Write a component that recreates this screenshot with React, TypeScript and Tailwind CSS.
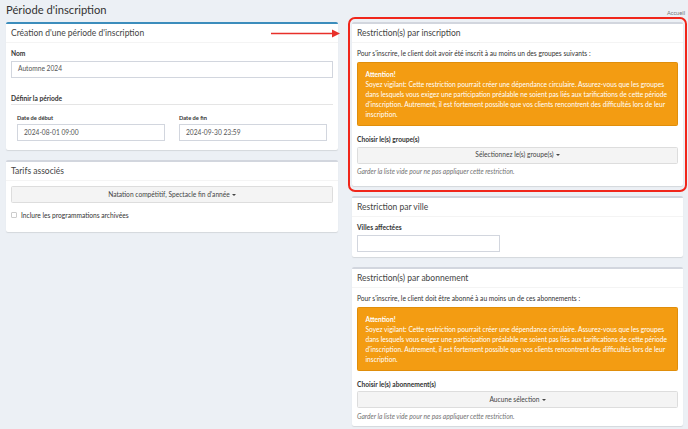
import React from "react";

const font = { fontFamily: "Lato, 'Open Sans', sans-serif" };

function Box({
  title,
  primary,
  children,
}: {
  title: string;
  primary?: boolean;
  children: React.ReactNode;
}) {
  return (
    <div
      className={
        primary
          ? "bg-white rounded-[2px] border-t-2 border-[#3c8dbc] shadow-[0_1px_1px_rgba(0,0,0,0.1)] mb-[10px]"
          : "bg-white rounded-[2px] border-t-2 border-[#d2d6de] shadow-[0_1px_1px_rgba(0,0,0,0.1)] mb-[10px]"
      }
    >
      <div className="px-[5px] pt-[4px] pb-[4px] border-b border-[#f4f4f4]">
        <h3 className="text-[8.5px] leading-[10px] text-[#444]">{title}</h3>
      </div>
      <div className="p-[5px]">{children}</div>
    </div>
  );
}

function Label({ children }: { children: React.ReactNode }) {
  return (
    <div className="text-[6.65px] leading-[10px] font-bold text-[#333] mb-[2.5px]">
      {children}
    </div>
  );
}

function Input({ value, className }: { value?: string; className?: string }) {
  return (
    <div
      className={
        "h-[17px] border border-[#d2d6de] bg-white px-[6px] flex items-center text-[6.65px] text-[#555] " +
        (className || "")
      }
    >
      {value}
    </div>
  );
}

function Dropdown({ label }: { label: string }) {
  return (
    <div className="h-[17px] rounded-[1.5px] border border-[#ddd] bg-[#f4f4f4] flex items-center justify-center text-[6.65px] text-[#444] gap-[2px]">
      <span>{label}</span>
      <span className="inline-block w-0 h-0 border-x-[2px] border-x-transparent border-t-[2px] border-t-[#444]" />
    </div>
  );
}

function Warning() {
  return (
    <div className="bg-[#f39c12] border border-[#e08e0b] rounded-[1.5px] px-[7.5px] py-[6px] text-white text-[6.65px] leading-[10px] whitespace-nowrap">
      <div className="font-bold">Attention!</div>
      <div>
        Soyez vigilant: Cette restriction pourrait créer une dépendance circulaire. Assurez-vous que les groupes
      </div>
      <div>
        dans lesquels vous exigez une participation préalable ne soient pas liés aux tarifications de cette période
      </div>
      <div>
        d'inscription. Autrement, il est fortement possible que vos clients rencontrent des difficultés lors de leur
      </div>
      <div>inscription.</div>
    </div>
  );
}

function Help() {
  return (
    <div className="text-[6.65px] leading-[10px] italic text-[#737373] mt-[2.5px]">
      Garder la liste vide pour ne pas appliquer cette restriction.
    </div>
  );
}

export default function App() {
  return (
    <div
      className="relative w-[688px] h-[429px] overflow-hidden bg-[#ecf0f5] text-[#333]"
      style={font}
    >
      <div className="flex justify-between items-start px-[6px] pt-[2px] h-[22px]">
        <h1 className="text-[11.2px] leading-[16px] text-[#333]">Période d'inscription</h1>
        <span className="text-[5.7px] text-[#777] mt-[7px] mr-[-3px]">Accueil</span>
      </div>

      <div className="grid grid-cols-[332px_331px] gap-x-[14px] pl-[6px]">
        <div>
          <Box title="Création d'une période d'inscription" primary>
            <Label>Nom</Label>
            <Input value="Automne 2024" />
            <div className="mt-[15px] pb-[1px] border-b border-[#e5e5e5] text-[6.65px] leading-[10px] font-bold">
              Définir la période
            </div>
            <div className="grid grid-cols-2 gap-x-[14px] px-[6px] mt-[9.5px] pb-[4px]">
              <div>
                <div className="text-[5.7px] leading-[8px] font-bold mb-[2px]">Date de début</div>
                <Input value="2024-08-01 09:00" />
              </div>
              <div>
                <div className="text-[5.7px] leading-[8px] font-bold mb-[2px]">Date de fin</div>
                <Input value="2024-09-30 23:59" />
              </div>
            </div>
          </Box>

          <Box title="Tarifs associés">
            <Dropdown label="Natation compétitif, Spectacle fin d'année" />
            <div className="flex items-center gap-[4px] mt-[7px] mb-[7px] text-[6.65px] leading-[10px]">
              <span className="w-[6px] h-[6px] border border-[#ccc] rounded-[1px] bg-white" />
              <span>Inclure les programmations archivées</span>
            </div>
          </Box>
        </div>

        <div>
          <Box title="Restriction(s) par inscription">
            <p className="text-[6.65px] leading-[10px] mb-[4px]">
              Pour s'inscrire, le client doit avoir été inscrit à au moins un des groupes suivants :
            </p>
            <Warning />
            <div className="mt-[8px]">
              <Label>Choisir le(s) groupe(s)</Label>
              <Dropdown label="Sélectionnez le(s) groupe(s)" />
              <Help />
            </div>
            <div className="h-[5px]" />
          </Box>

          <Box title="Restriction par ville">
            <Label>Villes affectées</Label>
            <Input className="w-[143px]" />
          </Box>

          <Box title="Restriction(s) par abonnement">
            <p className="text-[6.65px] leading-[10px] mb-[4px]">
              Pour s'inscrire, le client doit être abonné à au moins un de ces abonnements :
            </p>
            <Warning />
            <div className="mt-[8px]">
              <Label>Choisir le(s) abonnement(s)</Label>
              <Dropdown label="Aucune sélection" />
              <Help />
            </div>
          </Box>
        </div>
      </div>

      {/* annotation */}
      <div className="absolute left-[348px] top-[17px] w-[339px] h-[175px] border-2 border-[#f0261b] rounded-[7px] pointer-events-none" />
      <svg className="absolute left-[270px] top-[29px]" width="72" height="9" viewBox="0 0 72 9">
        <line x1="1" y1="4.5" x2="63" y2="4.5" stroke="#e8302a" strokeWidth="1.6" />
        <polygon points="62,0.5 70,4.5 62,8.5" fill="#e8302a" />
      </svg>
    </div>
  );
}
